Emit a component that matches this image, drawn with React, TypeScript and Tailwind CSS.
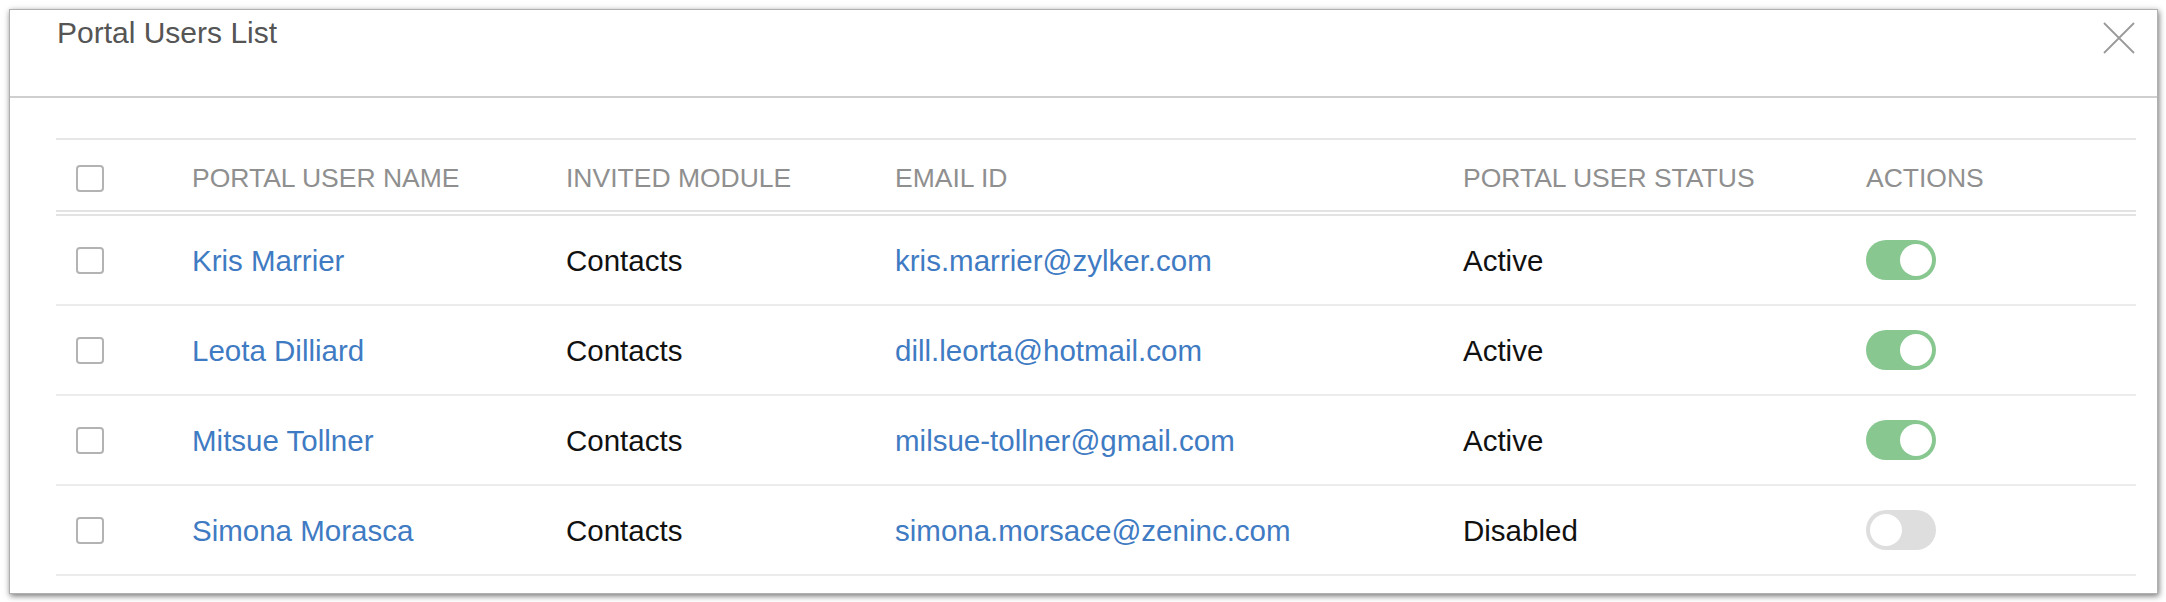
const users = [
  { name: 'Kris Marrier', module: 'Contacts', email: 'kris.marrier@zylker.com', status: 'Active', on: true },
  { name: 'Leota Dilliard', module: 'Contacts', email: 'dill.leorta@hotmail.com', status: 'Active', on: true },
  { name: 'Mitsue Tollner', module: 'Contacts', email: 'milsue-tollner@gmail.com', status: 'Active', on: true },
  { name: 'Simona Morasca', module: 'Contacts', email: 'simona.morsace@zeninc.com', status: 'Disabled', on: false },
];

const cols = 'grid grid-cols-[136px_374px_329px_568px_403px_1fr] items-center';

function Checkbox() {
  return <div className="ml-[20px] h-[27px] w-[28px] rounded-[4px] border-2 border-[#b3b3b3] bg-white" />;
}

function Toggle({ on }: { on: boolean }) {
  return (
    <div
      className={`flex h-[40px] w-[70px] items-center rounded-full px-[4px] ${
        on ? 'justify-end bg-[#88c890]' : 'justify-start bg-[#dedede]'
      }`}
    >
      <div className="h-[32px] w-[32px] rounded-full bg-white" />
    </div>
  );
}

export default function App() {
  return (
    <div className="h-[602px] w-[2166px] bg-white pl-[9px] pt-[9px] font-['Liberation_Sans',sans-serif]">
      <div className="h-[585px] w-[2149px] border border-[#b0b0b0] bg-white shadow-[1px_2px_6px_rgba(0,0,0,0.55)]">
        {/* Header */}
        <div className="flex h-[88px] items-start justify-between border-b-2 border-[#cfcfcf] pl-[47px] pr-[22px]">
          <h1 className="pt-[8px] text-[30px] leading-none text-[#555555]">Portal Users List</h1>
          <svg width="32" height="32" viewBox="0 0 32 32" className="mt-[12px]">
            <path d="M1 1 L31 31 M31 1 L1 31" stroke="#9a9a9a" strokeWidth="1.8" fill="none" />
          </svg>
        </div>

        {/* Table */}
        <div className="ml-[46px] mt-[40px] w-[2080px] border-t-2 border-[#e6e6e6]">
          <div className={`${cols} h-[76px] border-b-[6px] border-double border-[#e3e3e3] pt-[6px] text-[26.5px] leading-none text-[#8f8f8f]`}>
            <Checkbox />
            <span>PORTAL USER NAME</span>
            <span>INVITED MODULE</span>
            <span>EMAIL ID</span>
            <span>PORTAL USER STATUS</span>
            <span>ACTIONS</span>
          </div>
          {users.map((u) => (
            <div key={u.email} className={`${cols} h-[90px] border-b-2 border-[#ececec] text-[29.5px] leading-none text-[#111111]`}>
              <Checkbox />
              <span className="pt-[2px] text-[#3f7bc3]">{u.name}</span>
              <span className="pt-[2px]">{u.module}</span>
              <span className="pt-[2px] text-[#3f7bc3]">{u.email}</span>
              <span className="pt-[2px]">{u.status}</span>
              <div>
                <Toggle on={u.on} />
              </div>
            </div>
          ))}
        </div>
      </div>
    </div>
  );
}
